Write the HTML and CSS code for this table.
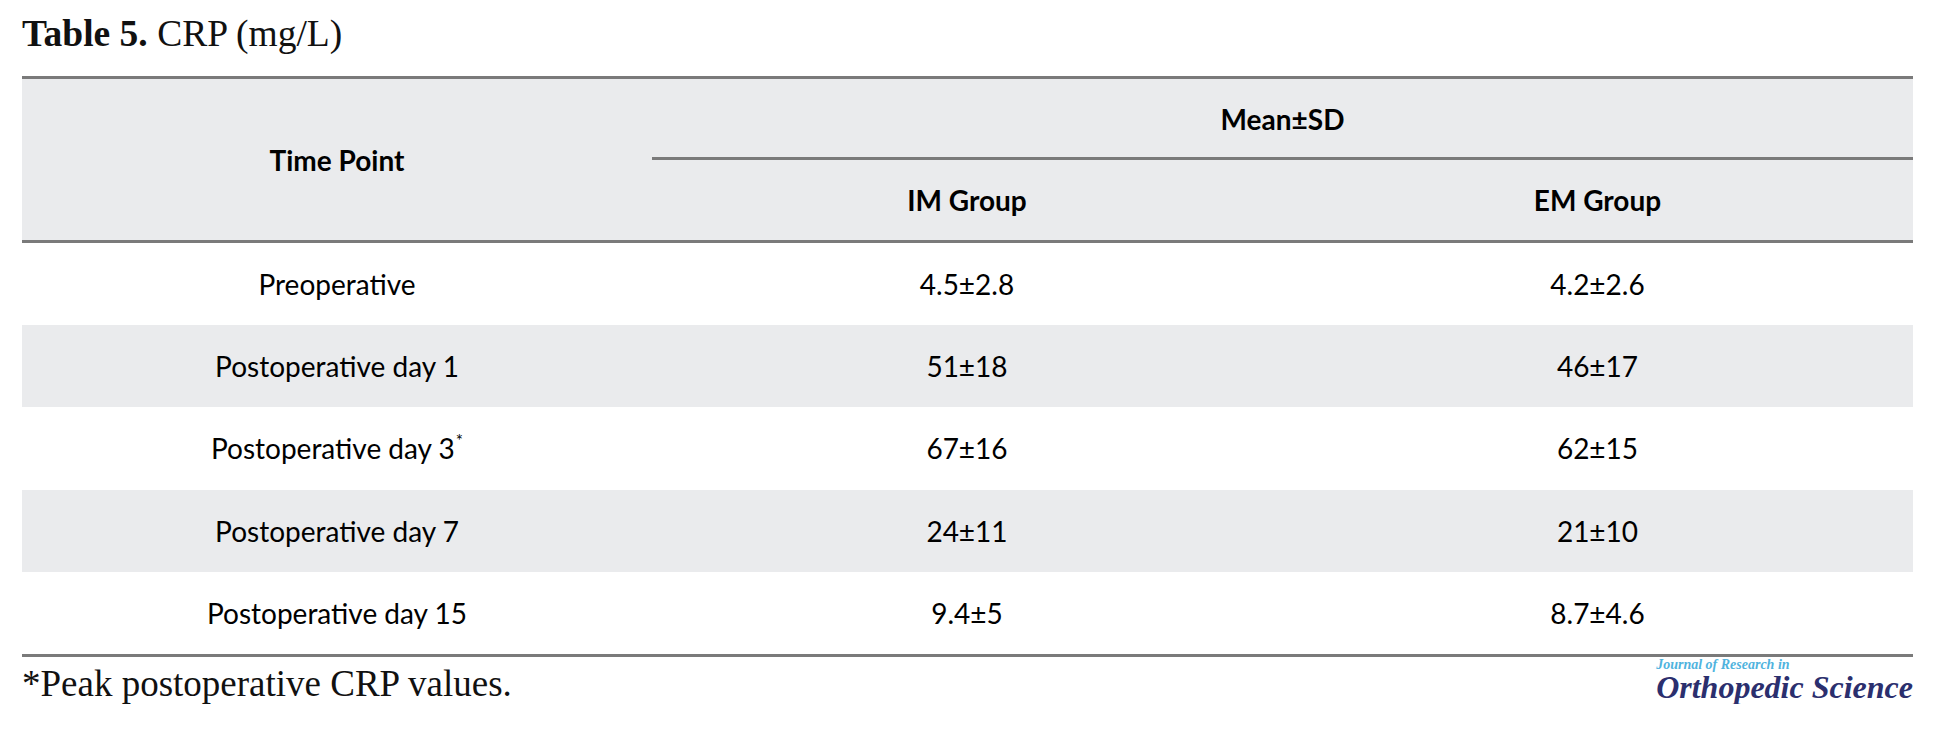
FILE: index.html
```html
<!DOCTYPE html>
<html lang="en">
<head>
<meta charset="utf-8">
<title>Table 5. CRP (mg/L)</title>
<link rel="stylesheet" href="styles.css">
</head>
<body>
<div class="page">
  <h1 class="caption"><b>Table 5.</b> CRP (mg/L)</h1>
  <div class="tbl">
    <div class="hd tp">Time Point</div>
    <div class="hd ms">Mean±SD</div>
    <div class="hd g">IM Group</div>
    <div class="hd g">EM Group</div>

    <div class="c">Preoperative</div><div class="c">4.5±2.8</div><div class="c">4.2±2.6</div>
    <div class="c alt">Postoperative day 1</div><div class="c alt">51±18</div><div class="c alt">46±17</div>
    <div class="c">Postoperative day 3<sup>*</sup></div><div class="c">67±16</div><div class="c">62±15</div>
    <div class="c alt">Postoperative day 7</div><div class="c alt">24±11</div><div class="c alt">21±10</div>
    <div class="c">Postoperative day 15</div><div class="c">9.4±5</div><div class="c">8.7±4.6</div>
  </div>
  <div class="foot">
    <p class="note">*Peak postoperative CRP values.</p>
    <div class="logo">
      <span class="logo-top">Journal of Research in</span>
      <span class="logo-main">Orthopedic Science</span>
    </div>
  </div>
</div>
</body>
</html>
```

FILE: styles.css
```css
html, body {
  margin: 0;
  padding: 0;
  background: #ffffff;
}

.page {
  width: 1891px;
  padding: 0 0 0 22px;
}

.caption {
  margin: 0;
  height: 76px;
  padding-top: 14px;
  box-sizing: border-box;
  font-family: "Liberation Serif", "DejaVu Serif", serif;
  font-weight: normal;
  font-size: 37.5px;
  line-height: 40px;
  color: #111;
}

.caption b {
  font-weight: bold;
}

.tbl {
  display: grid;
  grid-template-columns: 630px 630px 631px;
  grid-template-rows: 81px 83px repeat(5, 82.2px);
  border-top: 3px solid #7a7a7a;
  border-bottom: 3px solid #7a7a7a;
  font-family: Lato, "Open Sans", sans-serif;
  font-size: 28px;
  color: #000;
}

.hd {
  display: flex;
  align-items: center;
  justify-content: center;
  background: #eaebed;
  font-weight: bold;
}

.tp {
  grid-row: 1 / span 2;
  border-bottom: 3px solid #7a7a7a;
}

.ms {
  grid-column: 2 / span 2;
  border-bottom: 3px solid #7a7a7a;
  padding-top: 2px;
}

.g {
  border-bottom: 3px solid #7a7a7a;
}

.c {
  display: flex;
  align-items: center;
  justify-content: center;
  background: #ffffff;
}

.c.alt {
  background: #eaebed;
}

.c sup {
  font-size: 17px;
  align-self: flex-start;
  margin-top: 23px;
  margin-left: 1px;
}

.foot {
  display: flex;
  justify-content: space-between;
  align-items: flex-start;
}

.note {
  margin: 0;
  padding-top: 7px;
  font-family: "Liberation Serif", "DejaVu Serif", serif;
  font-size: 37px;
  line-height: 40px;
  color: #111;
}

.logo {
  display: flex;
  flex-direction: column;
  align-items: flex-start;
  padding-top: 0;
  font-family: "Liberation Serif", "DejaVu Serif", serif;
  font-style: italic;
  font-weight: bold;
}

.logo-top {
  font-size: 14px;
  line-height: 15px;
  color: #4fb3de;
}

.logo-main {
  font-size: 32px;
  line-height: 30px;
  color: #2b2f6e;
}
```
